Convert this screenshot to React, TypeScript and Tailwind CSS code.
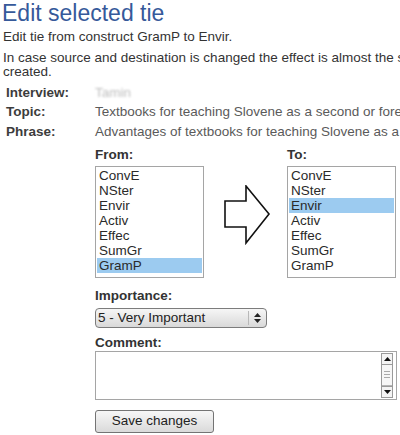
import React from 'react';

const fromItems = ['ConvE', 'NSter', 'Envir', 'Activ', 'Effec', 'SumGr', 'GramP'];

function ListBox({ items, selected }: { items: string[]; selected: string }) {
  return (
    <div className="h-[112px] border border-[#a5a5a5] bg-white p-[1px]">
      {items.map((it) => (
        <div
          key={it}
          className={
            'h-[15px] pl-[2px] text-[13.5px] leading-[15px] text-[#2a2a2a] ' +
            (it === selected ? 'bg-[#9ccbf0]' : '')
          }
        >
          {it}
        </div>
      ))}
    </div>
  );
}

function Arrow() {
  return (
    <svg width="48" height="60" viewBox="0 0 48 60" className="mt-[38px]">
      <polygon
        points="2,16 23,16 23,1 46,29 23,58 23,42 2,42"
        fill="#fff"
        stroke="#111"
        strokeWidth="1.6"
        strokeLinejoin="miter"
      />
    </svg>
  );
}

function InfoRow({ label, children }: { label: string; children: React.ReactNode }) {
  return (
    <div className="flex h-[19.5px] items-center text-[13.5px] leading-[16px]">
      <div className="w-[89px] font-bold text-[#3c3c3c]">{label}</div>
      <div className="whitespace-nowrap text-[#5a5a5a]">{children}</div>
    </div>
  );
}

function ScrollBar() {
  return (
    <div className="my-[1px] mr-[3px] flex w-[12px] flex-col border border-[#9a9a9a] bg-[#ececec]">
      <div className="flex h-[12px] items-center justify-center border-b border-[#9a9a9a] bg-[#f4f4f4]">
        <svg width="7" height="4" viewBox="0 0 7 4">
          <polygon points="0,4 3.5,0 7,4" fill="#111" />
        </svg>
      </div>
      <div className="flex h-[22px] flex-col items-center justify-center gap-[2px] border-b border-[#b5b5b5] bg-[#f7f7f7]">
        <div className="h-px w-[6px] bg-[#aaa]" />
        <div className="h-px w-[6px] bg-[#aaa]" />
        <div className="h-px w-[6px] bg-[#aaa]" />
      </div>
      <div className="flex-1" />
      <div className="flex h-[11px] items-center justify-center border-t border-[#9a9a9a] bg-[#f4f4f4]">
        <svg width="7" height="4" viewBox="0 0 7 4">
          <polygon points="0,0 7,0 3.5,4" fill="#111" />
        </svg>
      </div>
    </div>
  );
}

export default function App() {
  return (
    <div className="h-[435px] w-[400px] overflow-hidden bg-white font-['Liberation_Sans',Arial,sans-serif]">
      <div className="w-[760px]">
        <h1 className="pl-[2px] text-[23px] leading-[26px] font-normal text-[#36599a]">Edit selected tie</h1>
        <p className="mt-[3px] pl-[3px] text-[13.5px] leading-[16px] text-[#333]">
          Edit tie from construct GramP to Envir.
        </p>
        <p className="mt-[6px] pl-[3px] text-[13.5px] leading-[14px] whitespace-nowrap text-[#333]">
          In case source and destination is changed the effect is almost the same as if tie is deleted and new one is
          <br />
          created.
        </p>

        <div className="mt-[4px] pl-[6px]">
          <InfoRow label="Interview:">
            <span className="text-[#bdbdbd] blur-[1px]">Tamin</span>
          </InfoRow>
          <InfoRow label="Topic:">Textbooks for teaching Slovene as a second or foreign language</InfoRow>
          <InfoRow label="Phrase:">Advantages of textbooks for teaching Slovene as a second language</InfoRow>
        </div>

        <div className="mt-[5px] ml-[95px] w-[301px] text-[#333]">
          <div className="flex">
            <div className="w-[109px]">
              <div className="mb-[3px] text-[13.5px] leading-[16px] font-bold">From:</div>
              <ListBox items={fromItems} selected="GramP" />
            </div>
            <div className="flex w-[83px] justify-center pl-[2px]">
              <Arrow />
            </div>
            <div className="w-[109px]">
              <div className="mb-[3px] text-[13.5px] leading-[16px] font-bold">To:</div>
              <ListBox items={fromItems} selected="Envir" />
            </div>
          </div>

          <div className="mt-[10px] mb-[4px] text-[13.5px] leading-[16px] font-bold">Importance:</div>
          <div className="flex h-[20px] w-[172px] items-center rounded-[4px] border border-[#7c7c7c] bg-linear-to-b from-[#f6f6f6] to-[#d9d9d9] text-[13.5px] text-[#222]">
            <span className="flex-1 pl-[2px] leading-[18px]">5 - Very Important</span>
            <div className="h-[14px] w-px bg-[#b8b8b8]" />
            <div className="flex w-[17px] justify-center">
              <svg width="7" height="10" viewBox="0 0 7 10">
                <polygon points="0,4 3.5,0 7,4" fill="#222" />
                <polygon points="0,6 7,6 3.5,10" fill="#222" />
              </svg>
            </div>
          </div>

          <div className="mt-[7px] text-[13.5px] leading-[16px] font-bold">Comment:</div>
          <div className="flex h-[49px] w-[302px] border border-[#a5a5a5] bg-white">
            <div className="flex-1" />
            <ScrollBar />
          </div>

          <button className="mt-[10px] flex h-[23px] w-[119px] items-center justify-center rounded-[3px] border border-[#747474] bg-linear-to-b from-[#f7f7f7] to-[#dadada] text-[13.5px] text-[#222]">
            Save changes
          </button>
        </div>
      </div>
    </div>
  );
}
